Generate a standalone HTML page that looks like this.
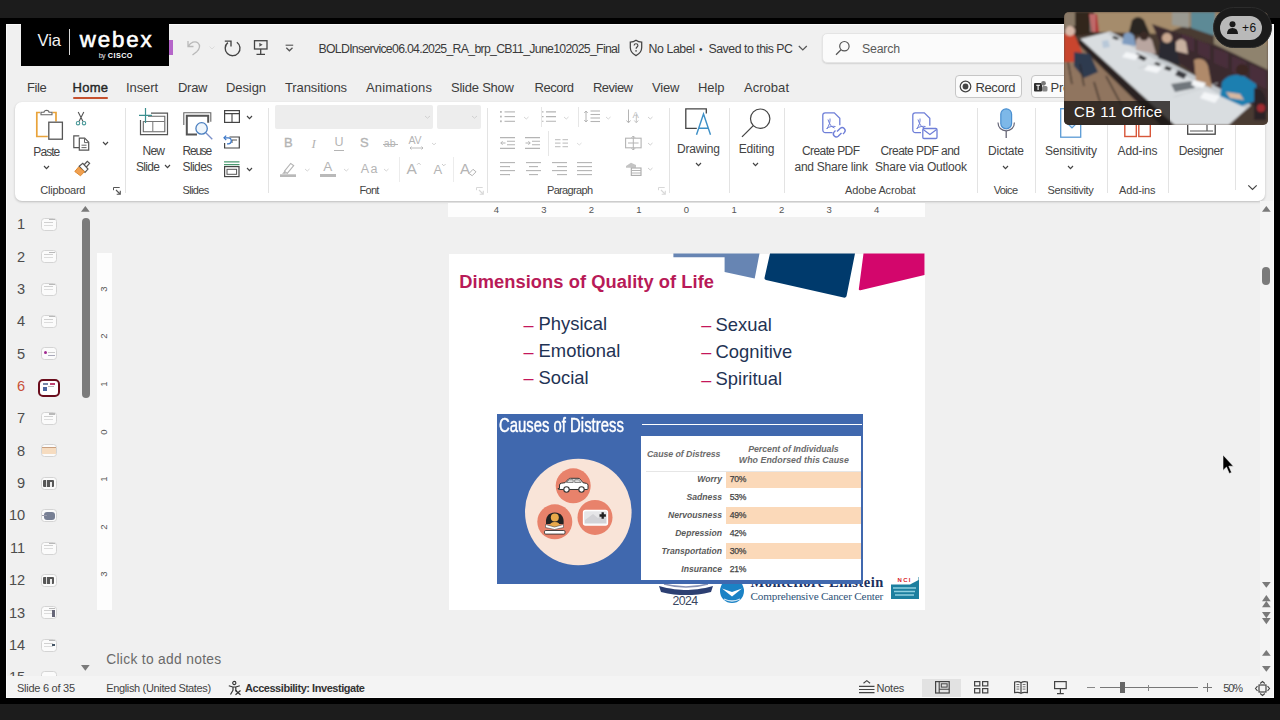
<!DOCTYPE html>
<html lang="en">
<head>
<meta charset="utf-8">
<title>PowerPoint via Webex</title>
<style>
*{box-sizing:border-box;margin:0;padding:0}
html,body{width:1280px;height:720px;overflow:hidden;background:#000}
body{position:relative;font-family:"Liberation Sans",sans-serif;color:#333;font-size:12px}
.abs{position:absolute}
.t{position:absolute;white-space:nowrap;line-height:1}
svg{overflow:visible}
#app{left:6px;top:24px;width:1268px;height:674px;background:#f0f0f0;overflow:hidden}
#pg{left:-6px;top:-24px;width:1280px;height:720px}
</style>
</head>
<body>
<div class="abs" style="left:0;top:0;width:1280px;height:18px;background:#1c1c1c"></div>
<div class="abs" style="left:0;top:704px;width:1280px;height:16px;background:#1c1c1c"></div>
<div class="abs" id="app"><div class="abs" id="pg">
<!-- TITLE BAR -->
<div class="abs" style="left:169px;top:40px;width:4px;height:15px;background:#b565c9;"></div>
<svg class="abs" style="left:186px;top:39px;" width="16" height="17" viewBox="0 0 16 17" fill="none"><path d="M2 2v5.5h5.5M2.3 7.3C4.5 3.2 9.2 1.6 12 4c2.6 2.3 1.6 5.8-1 8.400L6.500 16" stroke="#b9b9b9" stroke-width="1.3"/></svg>
<svg class="abs" style="left:209px;top:46px;" width="6" height="4" viewBox="0 0 6 4" fill="none"><path d="M.5.5l2.500 2.500L5.500.5" stroke="#dcdcdc" stroke-width="1"/></svg>
<svg class="abs" style="left:224px;top:39px;" width="17" height="17" viewBox="0 0 17 17" fill="none"><path d="M12.840 3.240A7.400 7.400 0 1 1 3.840 3.630" stroke="#444" stroke-width="1.350"/><path d="M.8 2.100h6.200v5.300" stroke="#444" stroke-width="1.350"/></svg>
<svg class="abs" style="left:253px;top:40px;" width="16" height="16" viewBox="0 0 16 16" fill="none"><rect x="1.500" y=".7" width="12.500" height="8.300" stroke="#444" stroke-width="1.3"/><path d="M7.700 9v5.200M3.500 14.400h8.500" stroke="#444" stroke-width="1.3"/><path d="M6.300 2.800v4l3.300-2z" fill="#555"/></svg>
<svg class="abs" style="left:285px;top:44px;" width="9" height="9" viewBox="0 0 9 9" fill="none"><path d="M.6 1.200h7.600" stroke="#555" stroke-width="1.100"/><path d="M1.300 3.800l3.100 3 3.100-3" stroke="#555" stroke-width="1.300"/></svg>
<div class="t" style="left:318.50px;top:43px;font-size:12.3px;color:#3b3b3b;letter-spacing:-0.707px;">BOLDInservice06.04.2025_RA_brp_CB11_June102025_Final</div>
<svg class="abs" style="left:629px;top:39px;" width="14" height="18" viewBox="0 0 14 18" fill="none"><path d="M7 1.200C5.200 2.600 3.200 3.100 1.300 3.200v5.300c0 4 2.700 6.600 5.700 8.100 3-1.500 5.700-4.100 5.700-8.100V3.200C10.800 3.100 8.800 2.600 7 1.200z" stroke="#444" stroke-width="1.250"/><path d="M5.100 6.600c0-1.300.9-1.900 1.900-1.900s1.900.7 1.900 1.800c0 1.500-1.800 1.600-1.800 3.200" stroke="#444" stroke-width="1.150"/><circle cx="7.050" cy="11.900" r=".8" fill="#444"/></svg>
<div class="t" style="left:648.50px;top:43px;font-size:12.3px;color:#3b3b3b;letter-spacing:-0.391px;">No Label</div>
<div class="t" style="left:699.00px;top:45px;font-size:10px;color:#3b3b3b;">•</div>
<div class="t" style="left:708.50px;top:43px;font-size:12.3px;color:#3b3b3b;letter-spacing:-0.474px;">Saved to this PC</div>
<svg class="abs" style="left:798px;top:45px;" width="10" height="7" viewBox="0 0 10 7" fill="none"><path d="M.8 1l4 4 4-4" stroke="#555" stroke-width="1.200"/></svg>
<div class="abs" style="left:822px;top:33px;width:330px;height:30px;background:#fbfbfb;border-radius:5px;border:1px solid #e4e4e4;box-shadow:0 1px 1.500px rgba(0,0,0,.12)"></div>
<svg class="abs" style="left:835px;top:40px;" width="16" height="16" viewBox="0 0 16 16" fill="none"><circle cx="9.400" cy="6.200" r="4.700" stroke="#555" stroke-width="1.200"/><path d="M6 9.700L1 14.800" stroke="#555" stroke-width="1.300"/></svg>
<div class="t" style="left:862.00px;top:43px;font-size:12.3px;color:#5a5a5a;letter-spacing:-0.195px;">Search</div>
<div class="t" style="left:27.00px;top:81px;font-size:13px;color:#3d3d3d;letter-spacing:-0.399px;">File</div>
<div class="t" style="left:72.50px;top:81px;font-size:13px;color:#262626;letter-spacing:0.274px;-webkit-text-stroke:.4px #262626;">Home</div>
<div class="t" style="left:126.00px;top:81px;font-size:13px;color:#3d3d3d;letter-spacing:-0.103px;">Insert</div>
<div class="t" style="left:178.00px;top:81px;font-size:13px;color:#3d3d3d;letter-spacing:-0.279px;">Draw</div>
<div class="t" style="left:226.00px;top:81px;font-size:13px;color:#3d3d3d;letter-spacing:-0.094px;">Design</div>
<div class="t" style="left:285.00px;top:81px;font-size:13px;color:#3d3d3d;letter-spacing:-0.110px;">Transitions</div>
<div class="t" style="left:366.00px;top:81px;font-size:13px;color:#3d3d3d;letter-spacing:0.188px;">Animations</div>
<div class="t" style="left:451.00px;top:81px;font-size:13px;color:#3d3d3d;letter-spacing:-0.227px;">Slide Show</div>
<div class="t" style="left:534.50px;top:81px;font-size:13px;color:#3d3d3d;letter-spacing:-0.482px;">Record</div>
<div class="t" style="left:593.00px;top:81px;font-size:13px;color:#3d3d3d;letter-spacing:-0.525px;">Review</div>
<div class="t" style="left:652.00px;top:81px;font-size:13px;color:#3d3d3d;letter-spacing:-0.148px;">View</div>
<div class="t" style="left:698.00px;top:81px;font-size:13px;color:#3d3d3d;letter-spacing:-0.079px;">Help</div>
<div class="t" style="left:744.00px;top:81px;font-size:13px;color:#3d3d3d;letter-spacing:0.033px;">Acrobat</div>
<div class="abs" style="left:72.5px;top:96.5px;width:35.5px;height:2.2px;background:#c5512f;border-radius:1px"></div>
<div class="abs" style="left:955px;top:74.5px;width:66.5px;height:23.5px;background:#fbfbfb;border-radius:4px;border:1px solid #c6c6c6"></div>
<svg class="abs" style="left:959px;top:79.8px;" width="13" height="13" viewBox="0 0 13 13" fill="none"><circle cx="6.500" cy="6.500" r="5.300" stroke="#444" stroke-width="1.200"/><circle cx="6.500" cy="6.500" r="2.900" fill="#444"/></svg>
<div class="t" style="left:975.50px;top:81px;font-size:13px;color:#3d3d3d;letter-spacing:-0.382px;">Record</div>
<div class="abs" style="left:1030.5px;top:74.5px;width:80px;height:23.5px;background:#fbfbfb;border-radius:4px;border:1px solid #c6c6c6"></div>
<svg class="abs" style="left:1034px;top:80px;" width="14" height="13" viewBox="0 0 14 13" fill="none"><rect x="0" y="3" width="8" height="8.500" rx="1" fill="#2e2e2e"/><circle cx="9.500" cy="3.300" r="2.400" fill="#777"/><rect x="8" y="6" width="5.500" height="5.500" rx="1.500" fill="#888"/><path d="M2.200 5.300h3.800M4.100 5.300v4.600" stroke="#fff" stroke-width="1.100"/></svg>
<div class="t" style="left:1050.50px;top:81px;font-size:13px;color:#3d3d3d;letter-spacing:-0.217px;">Present</div>
<!-- RIBBON -->
<div class="abs" style="left:15px;top:102px;width:1250px;height:98.5px;background:#fff;border-radius:7px;box-shadow:0 1px 2.500px rgba(0,0,0,.22)"></div>
<svg class="abs" style="left:35px;top:109px;" width="30" height="32" viewBox="0 0 30 32" fill="none"><path d="M5 3.500H1.800v24h11" stroke="#e9a33a" stroke-width="1.700"/><path d="M17.500 3.500h3.500v9" stroke="#e9a33a" stroke-width="1.700"/><path d="M6 5.800V3.300h3c0-2.600 5-2.600 5 0h3v2.500z" stroke="#666" stroke-width="1.100" fill="#fff"/><rect x="13.800" y="13.200" width="13.600" height="17" stroke="#555" stroke-width="1.300" fill="#fff"/></svg>
<div class="t" style="left:33.30px;top:146px;font-size:12px;color:#444;letter-spacing:-0.922px;">Paste</div>
<svg class="abs" style="left:43.9px;top:166.0px;" width="5" height="2.6" viewBox="0 0 5 2.6" fill="none"><path d="M0 0l2.5 2.6L5 0" stroke="#444" stroke-width="1.2"/></svg>
<svg class="abs" style="left:76px;top:112px;" width="10" height="13.5" viewBox="0 0 10 13.5" fill="none"><path d="M2.200 0L7 9.500M7.800 0L3 9.500" stroke="#555" stroke-width="1.100"/><circle cx="2" cy="11.200" r="1.700" stroke="#4a9a9a" stroke-width="1.100"/><circle cx="8" cy="11.200" r="1.700" stroke="#4a9a9a" stroke-width="1.100"/></svg>
<svg class="abs" style="left:73px;top:135px;" width="17" height="16" viewBox="0 0 17 16" fill="none"><path d="M6 12.700H.8V.8h5.500" stroke="#555" stroke-width="1.200"/><path d="M6.300 3.200h5.400l4 4v8H6.300z" stroke="#555" stroke-width="1.200" fill="#fff"/><path d="M11.500 3.400v4.200h4M8.500 10.200h5M8.500 12.600h5" stroke="#666" stroke-width="1"/></svg>
<svg class="abs" style="left:102.9px;top:142.29999999999998px;" width="5" height="2.6" viewBox="0 0 5 2.6" fill="none"><path d="M0 0l2.5 2.6L5 0" stroke="#444" stroke-width="1.2"/></svg>
<svg class="abs" style="left:74px;top:160px;" width="17" height="17" viewBox="0 0 17 17" fill="none"><path d="M9.500 5.500l3.800-4.200 2.300 2.100-3.700 4.100" stroke="#555" stroke-width="1.200" fill="#fff"/><path d="M5.200 6.300l3.600-3 5.200 5.800-3 3.300z" stroke="#555" stroke-width="1.200" fill="#fff"/><path d="M4.600 7L.8 11.500l5.700 4.300 4-4.200z" fill="#f0a050" stroke="#e08a30" stroke-width="1"/></svg>
<div class="t" style="left:40.30px;top:185px;font-size:11px;color:#444;letter-spacing:-0.236px;">Clipboard</div>
<svg class="abs" style="left:113px;top:187px;" width="8" height="8" viewBox="0 0 8 8" fill="none"><path d="M.5 3.200V.5h6.200" stroke="#555" stroke-width="1"/><path d="M3 3l4 4M7.300 3.700v3.600H3.700" stroke="#555" stroke-width="1.100"/></svg>
<div class="abs" style="left:125px;top:108px;width:1px;height:85px;background:#e3e3e3;"></div>
<svg class="abs" style="left:139px;top:108px;" width="30" height="28" viewBox="0 0 30 28" fill="none"><path d="M12 5.200h16.500v21.400H1.500V12" stroke="#555" stroke-width="1.200"/><path d="M9 8.200h16.800v15.600H4.300V13" stroke="#666" stroke-width="1.100"/><path d="M4.500 13.500h21M13.800 13.500v10" stroke="#777" stroke-width="1"/><path d="M6.500 0v15M0 7.300h13" stroke="#3a8f8f" stroke-width="1.200"/></svg>
<div class="t" style="left:142.50px;top:145px;font-size:12px;color:#444;letter-spacing:-0.753px;">New</div>
<div class="t" style="left:136.00px;top:161px;font-size:12px;color:#444;letter-spacing:-0.671px;">Slide</div>
<svg class="abs" style="left:165.0px;top:165.29999999999998px;" width="5" height="2.6" viewBox="0 0 5 2.6" fill="none"><path d="M0 0l2.5 2.6L5 0" stroke="#444" stroke-width="1.2"/></svg>
<svg class="abs" style="left:183px;top:112px;" width="31" height="29" viewBox="0 0 31 29" fill="none"><path d="M.8 13V.8h27v9" stroke="#666" stroke-width="1.100"/><path d="M14 22.500H3.800V3.800h21.400v7" stroke="#555" stroke-width="2"/><circle cx="18.600" cy="16.400" r="5.700" stroke="#4a7fc0" stroke-width="1.300" fill="#eef5fb"/><path d="M22.800 20.700l6.500 6.500" stroke="#7a8fc8" stroke-width="1.300"/></svg>
<div class="t" style="left:182.60px;top:145px;font-size:12px;color:#444;letter-spacing:-1.272px;">Reuse</div>
<div class="t" style="left:182.60px;top:161px;font-size:12px;color:#444;letter-spacing:-0.617px;">Slides</div>
<svg class="abs" style="left:224px;top:110px;" width="16" height="13" viewBox="0 0 16 13" fill="none"><rect x=".6" y=".6" width="14.800" height="11.800" stroke="#444" stroke-width="1.200"/><path d="M.6 3.600h14.800M8 3.600v8.800" stroke="#444" stroke-width="1.100"/></svg>
<svg class="abs" style="left:246.7px;top:116.2px;" width="5" height="2.6" viewBox="0 0 5 2.6" fill="none"><path d="M0 0l2.5 2.6L5 0" stroke="#444" stroke-width="1.2"/></svg>
<svg class="abs" style="left:223px;top:135px;" width="17" height="14" viewBox="0 0 17 14" fill="none"><path d="M6.500 2h9.800v11H1.600V8" stroke="#444" stroke-width="1.200"/><path d="M9 5h5M9 5v3" stroke="#555" stroke-width="1"/><path d="M1 2.800h4.300a3 3 0 010 6H4" stroke="#3c78c8" stroke-width="1.200"/><path d="M3.200.6L1 2.800 3.200 5" stroke="#3c78c8" stroke-width="1.200"/></svg>
<svg class="abs" style="left:224px;top:161px;" width="16" height="16" viewBox="0 0 16 16" fill="none"><path d="M0 .8h15.500M0 3.600h15.500" stroke="#4a9a70" stroke-width="1.200"/><rect x=".6" y="5.600" width="14.400" height="10" stroke="#444" stroke-width="1.200"/><rect x="3" y="8.300" width="9.600" height="5" stroke="#555" stroke-width="1"/></svg>
<svg class="abs" style="left:246.7px;top:168.0px;" width="5" height="2.6" viewBox="0 0 5 2.6" fill="none"><path d="M0 0l2.5 2.6L5 0" stroke="#444" stroke-width="1.2"/></svg>
<div class="t" style="left:182.60px;top:185px;font-size:11px;color:#444;letter-spacing:-0.652px;">Slides</div>
<div class="abs" style="left:267.5px;top:108px;width:1px;height:85px;background:#e3e3e3;"></div>
<div class="abs" style="left:275px;top:105px;width:158px;height:24px;background:#ededed;border-radius:2px"></div>
<div class="abs" style="left:437px;top:105px;width:43.5px;height:24px;background:#ededed;border-radius:2px"></div>
<svg class="abs" style="left:425.0px;top:115.9px;" width="5" height="2.2" viewBox="0 0 5 2.2" fill="none"><path d="M0 0l2.5 2.2L5 0" stroke="#d0d0d0" stroke-width="1"/></svg>
<svg class="abs" style="left:471.5px;top:115.9px;" width="5" height="2.2" viewBox="0 0 5 2.2" fill="none"><path d="M0 0l2.5 2.2L5 0" stroke="#d0d0d0" stroke-width="1"/></svg>
<div class="t" style="left:284.00px;top:136px;font-size:13px;color:#b4b4b4;-webkit-text-stroke:.35px #b4b4b4;">B</div>
<div class="t" style="left:311.50px;top:137px;font-size:13px;color:#b4b4b4;font-family:'Liberation Serif',serif;font-style:italic;">I</div>
<div class="t" style="left:334.50px;top:136px;font-size:12.5px;color:#b4b4b4;">U</div>
<div class="abs" style="left:334px;top:149.5px;width:10px;height:1px;background:#b4b4b4;"></div>
<div class="t" style="left:360.00px;top:136px;font-size:13px;color:#b4b4b4;-webkit-text-stroke:.35px #b4b4b4;">S</div>
<div class="t" style="left:383.80px;top:138px;font-size:10.5px;color:#b4b4b4;">ab</div>
<div class="abs" style="left:382.5px;top:143.5px;width:15.5px;height:1px;background:#b4b4b4;"></div>
<div class="t" style="left:408.50px;top:135px;font-size:10.5px;color:#b4b4b4;letter-spacing:-.3px;">AV</div>
<svg class="abs" style="left:408.5px;top:146px;" width="15" height="4" viewBox="0 0 15 4" fill="none"><path d="M1 2h13M2.500.5L1 2l1.500 1.500M12.500.5L14 2l-1.500 1.500" stroke="#b4b4b4" stroke-width=".9"/></svg>
<svg class="abs" style="left:431.5px;top:142.6px;" width="4" height="1.8" viewBox="0 0 4 1.8" fill="none"><path d="M0 0l2.0 1.8L4 0" stroke="#d6d6d6" stroke-width="1"/></svg>
<svg class="abs" style="left:280px;top:161px;" width="16" height="16" viewBox="0 0 16 16" fill="none"><path d="M4.500 10.200l6.200-7.800 3 2.300-6.500 7.700z" stroke="#b4b4b4" stroke-width="1.100"/><path d="M4.500 10.200L2 12.800h4z" fill="#b4b4b4"/><rect x="0" y="13.300" width="16" height="2.700" fill="#b9b9b9"/></svg>
<svg class="abs" style="left:304.75px;top:168.5px;" width="4.5" height="2" viewBox="0 0 4.5 2" fill="none"><path d="M0 0l2.25 2L4.5 0" stroke="#d6d6d6" stroke-width="1"/></svg>
<div class="t" style="left:323.20px;top:160px;font-size:13.5px;color:#b4b4b4;">A</div>
<div class="abs" style="left:320px;top:174.3px;width:16px;height:2.7px;background:#b9b9b9;"></div>
<svg class="abs" style="left:344.35px;top:168.5px;" width="4.5" height="2" viewBox="0 0 4.5 2" fill="none"><path d="M0 0l2.25 2L4.5 0" stroke="#d6d6d6" stroke-width="1"/></svg>
<div class="t" style="left:360.80px;top:163px;font-size:12.5px;color:#b4b4b4;letter-spacing:1.410px;">Aa</div>
<svg class="abs" style="left:383.75px;top:168.5px;" width="4.5" height="2" viewBox="0 0 4.5 2" fill="none"><path d="M0 0l2.25 2L4.5 0" stroke="#d6d6d6" stroke-width="1"/></svg>
<div class="abs" style="left:399px;top:157px;width:1px;height:25px;background:#ececec;"></div>
<div class="t" style="left:406.50px;top:161px;font-size:15.5px;color:#b4b4b4;">A</div>
<svg class="abs" style="left:417.2px;top:163.1px;" width="3.6" height="1.8" viewBox="0 0 3.6 1.8" fill="none"><path d="M0 1.8L1.8 0l1.8 1.8" stroke="#c4c4c4" stroke-width="0.9"/></svg>
<div class="t" style="left:433.50px;top:163px;font-size:13px;color:#b4b4b4;">A</div>
<svg class="abs" style="left:442.2px;top:163.6px;" width="3.6" height="1.8" viewBox="0 0 3.6 1.8" fill="none"><path d="M0 0l1.8 1.8L3.6 0" stroke="#c4c4c4" stroke-width="0.9"/></svg>
<div class="abs" style="left:453px;top:157px;width:1px;height:25px;background:#ececec;"></div>
<div class="t" style="left:460.00px;top:161px;font-size:15px;color:#b4b4b4;">A</div>
<svg class="abs" style="left:468px;top:168px;" width="9" height="8" viewBox="0 0 9 8" fill="none"><path d="M1 5.500L5 1.300l3 2.500-3.800 3.900z" stroke="#b4b4b4" stroke-width="1" fill="#fff"/></svg>
<div class="t" style="left:359.40px;top:185px;font-size:11px;color:#444;letter-spacing:-0.670px;">Font</div>
<svg class="abs" style="left:476px;top:186.5px;" width="8" height="8" viewBox="0 0 8 8" fill="none"><path d="M.5 3.200V.5h6.200" stroke="#d8d8d8" stroke-width="1"/><path d="M3 3l4 4M7.300 3.700v3.600H3.700" stroke="#d8d8d8" stroke-width="1.100"/></svg>
<div class="abs" style="left:487px;top:108px;width:1px;height:85px;background:#e3e3e3;"></div>
<svg class="abs" style="left:499.5px;top:110.5px;" width="16" height="12" viewBox="0 0 16 12" fill="none"><rect x="0" y="0.0" width="1.800" height="1.800" fill="#b9b9b9"/><path d="M4.500 0.9h10.500" stroke="#b4b4b4" stroke-width="1.100"/><rect x="0" y="4.7" width="1.800" height="1.800" fill="#b9b9b9"/><path d="M4.500 5.6000000000000005h10.500" stroke="#b4b4b4" stroke-width="1.100"/><rect x="0" y="9.4" width="1.800" height="1.800" fill="#b9b9b9"/><path d="M4.500 10.3h10.500" stroke="#b4b4b4" stroke-width="1.100"/></svg>
<svg class="abs" style="left:523.75px;top:116.5px;" width="4.5" height="2" viewBox="0 0 4.5 2" fill="none"><path d="M0 0l2.25 2L4.5 0" stroke="#d6d6d6" stroke-width="1"/></svg>
<svg class="abs" style="left:542px;top:110.5px;" width="16" height="12" viewBox="0 0 16 12" fill="none"><path d="M0 0.9h1.500M4 0.9h10" stroke="#b4b4b4" stroke-width="1.100"/><path d="M0 5.6000000000000005h1.500M4 5.6000000000000005h10" stroke="#b4b4b4" stroke-width="1.100"/><path d="M0 10.3h1.500M4 10.3h10" stroke="#b4b4b4" stroke-width="1.100"/></svg>
<svg class="abs" style="left:564.35px;top:116.5px;" width="4.5" height="2" viewBox="0 0 4.5 2" fill="none"><path d="M0 0l2.25 2L4.5 0" stroke="#d6d6d6" stroke-width="1"/></svg>
<div class="abs" style="left:541px;top:107px;width:1px;height:20px;background:#e6e6e6;"></div>
<div class="abs" style="left:577.5px;top:107px;width:1px;height:20px;background:#e6e6e6;"></div>
<svg class="abs" style="left:584px;top:110px;" width="17" height="13" viewBox="0 0 17 13" fill="none"><path d="M2 1v11M.3 3L2 1l1.700 2M.3 10L2 12l1.700-2" stroke="#b4b4b4" stroke-width="1"/><path d="M6.500 1.0h9.500" stroke="#b4b4b4" stroke-width="1.100"/><path d="M6.500 4.5h9.500" stroke="#b4b4b4" stroke-width="1.100"/><path d="M6.500 8.0h9.500" stroke="#b4b4b4" stroke-width="1.100"/><path d="M6.500 11.5h9.500" stroke="#b4b4b4" stroke-width="1.100"/></svg>
<svg class="abs" style="left:606.15px;top:116.5px;" width="4.5" height="2" viewBox="0 0 4.5 2" fill="none"><path d="M0 0l2.25 2L4.5 0" stroke="#d6d6d6" stroke-width="1"/></svg>
<svg class="abs" style="left:626px;top:109px;" width="14" height="15" viewBox="0 0 14 15" fill="none"><path d="M2.500 .5v13M.5 11.500l2 2.300 2-2.300" stroke="#b4b4b4" stroke-width="1"/><path d="M10.300 13.500V5M8.300 11.500l2 2.300 2-2.300" stroke="#c4c4c4" stroke-width="1"/></svg>
<div class="t" style="left:632.50px;top:110px;font-size:9.5px;color:#bcbcbc;">A</div>
<svg class="abs" style="left:648.35px;top:116.5px;" width="4.5" height="2" viewBox="0 0 4.5 2" fill="none"><path d="M0 0l2.25 2L4.5 0" stroke="#d0d0d0" stroke-width="1"/></svg>
<svg class="abs" style="left:499.5px;top:137px;" width="16" height="12" viewBox="0 0 16 12" fill="none"><path d="M0 .6h15M7 4.200h8M7 7.800h8M0 11.400h15" stroke="#b4b4b4" stroke-width="1.100"/><path d="M5.500 6H.8M2.600 4.200L.8 6l1.800 1.800" stroke="#b4b4b4" stroke-width="1"/></svg>
<svg class="abs" style="left:525px;top:137px;" width="16" height="12" viewBox="0 0 16 12" fill="none"><path d="M0 .6h15M7 4.200h8M7 7.800h8M0 11.400h15" stroke="#b4b4b4" stroke-width="1.100"/><path d="M.5 6h4.700M3.400 4.200L5.200 6 3.400 7.800" stroke="#b4b4b4" stroke-width="1"/></svg>
<div class="abs" style="left:547.5px;top:131px;width:1px;height:25px;background:#e6e6e6;"></div>
<svg class="abs" style="left:555px;top:139px;" width="13" height="9" viewBox="0 0 13 9" fill="none"><path d="M0 .6h5.500M7.500 .6H13M0 4.100h5.500M7.500 4.100H13M0 7.600h5.500M7.500 7.600H13" stroke="#c8c8c8" stroke-width="1.100"/></svg>
<svg class="abs" style="left:576.75px;top:142.5px;" width="4.5" height="2" viewBox="0 0 4.5 2" fill="none"><path d="M0 0l2.25 2L4.5 0" stroke="#dedede" stroke-width="1"/></svg>
<svg class="abs" style="left:625px;top:136px;" width="17" height="14" viewBox="0 0 17 14" fill="none"><rect x=".6" y="2.200" width="15.500" height="9.600" stroke="#b4b4b4" stroke-width="1.100"/><path d="M8.300 0v14M6.500 1.800L8.300 0l1.800 1.800M6.500 12.200L8.300 14l1.800-1.800M3 7h10.600" stroke="#b4b4b4" stroke-width="1"/></svg>
<svg class="abs" style="left:648.35px;top:142.5px;" width="4.5" height="2" viewBox="0 0 4.5 2" fill="none"><path d="M0 0l2.25 2L4.5 0" stroke="#d0d0d0" stroke-width="1"/></svg>
<svg class="abs" style="left:499.5px;top:162px;" width="16" height="14" viewBox="0 0 16 14" fill="none"><path d="M0 0.6h15" stroke="#b4b4b4" stroke-width="1.100"/><path d="M0 4.6h10" stroke="#b4b4b4" stroke-width="1.100"/><path d="M0 8.6h15" stroke="#b4b4b4" stroke-width="1.100"/><path d="M0 12.6h10" stroke="#b4b4b4" stroke-width="1.100"/></svg>
<svg class="abs" style="left:525.5px;top:162px;" width="16" height="14" viewBox="0 0 16 14" fill="none"><path d="M0 0.6h15" stroke="#b4b4b4" stroke-width="1.100"/><path d="M3 4.6h9" stroke="#b4b4b4" stroke-width="1.100"/><path d="M0 8.6h15" stroke="#b4b4b4" stroke-width="1.100"/><path d="M3 12.6h9" stroke="#b4b4b4" stroke-width="1.100"/></svg>
<svg class="abs" style="left:551.5px;top:162px;" width="16" height="14" viewBox="0 0 16 14" fill="none"><path d="M0 0.6h15" stroke="#b4b4b4" stroke-width="1.100"/><path d="M5 4.6h10" stroke="#b4b4b4" stroke-width="1.100"/><path d="M0 8.6h15" stroke="#b4b4b4" stroke-width="1.100"/><path d="M5 12.6h10" stroke="#b4b4b4" stroke-width="1.100"/></svg>
<svg class="abs" style="left:577px;top:162px;" width="16" height="14" viewBox="0 0 16 14" fill="none"><path d="M0 0.6h15" stroke="#b4b4b4" stroke-width="1.100"/><path d="M0 4.6h15" stroke="#b4b4b4" stroke-width="1.100"/><path d="M0 8.6h15" stroke="#b4b4b4" stroke-width="1.100"/><path d="M0 12.6h15" stroke="#b4b4b4" stroke-width="1.100"/></svg>
<svg class="abs" style="left:625px;top:162px;" width="17" height="14" viewBox="0 0 17 14" fill="none"><path d="M1 4L6 .8l5 2.200v2.800H1z" fill="#c4c4c4"/><rect x="6.300" y="6" width="9.700" height="7.400" stroke="#aaa" stroke-width="1.100" fill="#fff"/><path d="M6.300 8.500h9.700M6.300 11h9.700" stroke="#b4b4b4" stroke-width="1"/></svg>
<svg class="abs" style="left:648.35px;top:168.0px;" width="4.5" height="2" viewBox="0 0 4.5 2" fill="none"><path d="M0 0l2.25 2L4.5 0" stroke="#d0d0d0" stroke-width="1"/></svg>
<div class="t" style="left:547.00px;top:185px;font-size:11px;color:#444;letter-spacing:-0.671px;">Paragraph</div>
<svg class="abs" style="left:657.5px;top:186.5px;" width="8" height="8" viewBox="0 0 8 8" fill="none"><path d="M.5 3.200V.5h6.200" stroke="#d8d8d8" stroke-width="1"/><path d="M3 3l4 4M7.300 3.700v3.600H3.700" stroke="#d8d8d8" stroke-width="1.100"/></svg>
<div class="abs" style="left:668.5px;top:108px;width:1px;height:85px;background:#e3e3e3;"></div>
<svg class="abs" style="left:685px;top:108px;" width="27" height="28" viewBox="0 0 27 28" fill="none"><path d="M21.300 5.500V.8H.8v19.500h11" stroke="#444" stroke-width="1.300"/><path d="M11.500 26.800L18.500 6l7 20.800M13.800 20.300h9.400" stroke="#3d8fc6" stroke-width="1.400"/></svg>
<div class="t" style="left:677.00px;top:143px;font-size:12px;color:#444;letter-spacing:-0.170px;">Drawing</div>
<svg class="abs" style="left:695.5px;top:163.0px;" width="5" height="2.6" viewBox="0 0 5 2.6" fill="none"><path d="M0 0l2.5 2.6L5 0" stroke="#444" stroke-width="1.2"/></svg>
<div class="abs" style="left:729px;top:108px;width:1px;height:85px;background:#e3e3e3;"></div>
<svg class="abs" style="left:741px;top:108px;" width="30" height="30" viewBox="0 0 30 30" fill="none"><circle cx="19.200" cy="10.700" r="9.700" stroke="#444" stroke-width="1.200"/><path d="M12.300 17.600L1 28.900" stroke="#444" stroke-width="1.300"/></svg>
<div class="t" style="left:738.75px;top:143px;font-size:12px;color:#444;letter-spacing:-0.157px;">Editing</div>
<svg class="abs" style="left:753.25px;top:163.0px;" width="5" height="2.6" viewBox="0 0 5 2.6" fill="none"><path d="M0 0l2.5 2.6L5 0" stroke="#444" stroke-width="1.2"/></svg>
<div class="abs" style="left:783.75px;top:108px;width:1px;height:85px;background:#e3e3e3;"></div>
<svg class="abs" style="left:822px;top:112px;" width="26" height="28" viewBox="0 0 26 28" fill="none"><path d="M10.500 20.600H3.300A2.500 2.500 0 01.8 18.100V3.300A2.500 2.500 0 013.300.8h9l5.500 5.500v7" stroke="#6f7fd8" stroke-width="1.300"/><path d="M6 7.500c1.500 4.500 3 7.500 6.500 8.500M5 17c2-4 3.500-7 3-10.500M4.500 16.500c3-2 6-2.500 9-2" stroke="#6f7fd8" stroke-width="1" fill="none"/><path d="M15 19.500l3.300-3.300a3 3 0 014.200 4.200l-1.500 1.500M19.500 21l-3.300 3.300a3 3 0 01-4.200-4.200l1.500-1.500" stroke="#6f7fd8" stroke-width="1.400"/></svg>
<div class="t" style="left:802.00px;top:145px;font-size:12px;color:#444;letter-spacing:-0.595px;">Create PDF</div>
<div class="t" style="left:794.50px;top:161px;font-size:12px;color:#444;letter-spacing:-0.248px;">and Share link</div>
<svg class="abs" style="left:912px;top:112px;" width="26" height="28" viewBox="0 0 26 28" fill="none"><path d="M9 20.600H3.300A2.500 2.500 0 01.8 18.100V3.300A2.500 2.500 0 013.300.8h9l5.500 5.500v7.500" stroke="#6f7fd8" stroke-width="1.300"/><path d="M6 7.500c1.500 4.500 3 7.500 6.500 8.500M5 17c2-4 3.500-7 3-10.500M4.500 16.500c3-2 6-2.500 9-2" stroke="#6f7fd8" stroke-width="1" fill="none"/><rect x="10.800" y="16.500" width="14.200" height="10" rx="1.200" stroke="#6f7fd8" stroke-width="1.300" fill="#fff"/><path d="M11.200 17.500l6.700 5 6.700-5" stroke="#6f7fd8" stroke-width="1.200"/></svg>
<div class="t" style="left:880.50px;top:145px;font-size:12px;color:#444;letter-spacing:-0.555px;">Create PDF and</div>
<div class="t" style="left:875.00px;top:161px;font-size:12px;color:#444;letter-spacing:-0.212px;">Share via Outlook</div>
<div class="t" style="left:845.00px;top:185px;font-size:11px;color:#444;letter-spacing:-0.139px;">Adobe Acrobat</div>
<div class="abs" style="left:977px;top:108px;width:1px;height:85px;background:#e3e3e3;"></div>
<svg class="abs" style="left:997px;top:108px;" width="18" height="32" viewBox="0 0 18 32" fill="none"><rect x="3.800" y=".8" width="10.800" height="20" rx="5.400" fill="#7db8e8" stroke="#4a8fd0" stroke-width="1.200"/><path d="M1 14.500c0 5 3.500 8.300 8.200 8.300s8.200-3.300 8.200-8.300" stroke="#667" stroke-width="1.200"/><path d="M9.200 23v7" stroke="#667" stroke-width="1.300"/></svg>
<div class="t" style="left:988.00px;top:145px;font-size:12px;color:#444;letter-spacing:-0.225px;">Dictate</div>
<svg class="abs" style="left:1003.0px;top:165.7px;" width="5" height="2.6" viewBox="0 0 5 2.6" fill="none"><path d="M0 0l2.5 2.6L5 0" stroke="#444" stroke-width="1.2"/></svg>
<div class="t" style="left:993.75px;top:185px;font-size:11px;color:#444;letter-spacing:-0.665px;">Voice</div>
<div class="abs" style="left:1034.5px;top:108px;width:1px;height:85px;background:#e3e3e3;"></div>
<svg class="abs" style="left:1060px;top:108px;" width="22" height="30" viewBox="0 0 22 30" fill="none"><rect x=".7" y=".7" width="20" height="28.500" stroke="#5b9bd5" stroke-width="1.300"/><path d="M8 16l6.500-6.500 4 4L12 20z" stroke="#5b9bd5" stroke-width="1.200" fill="#cfe3f5"/></svg>
<div class="t" style="left:1045.00px;top:145px;font-size:12px;color:#444;letter-spacing:-0.202px;">Sensitivity</div>
<svg class="abs" style="left:1068.0px;top:165.7px;" width="5" height="2.6" viewBox="0 0 5 2.6" fill="none"><path d="M0 0l2.5 2.6L5 0" stroke="#444" stroke-width="1.2"/></svg>
<div class="t" style="left:1047.50px;top:185px;font-size:11px;color:#444;letter-spacing:-0.327px;">Sensitivity</div>
<div class="abs" style="left:1106.75px;top:108px;width:1px;height:85px;background:#e3e3e3;"></div>
<svg class="abs" style="left:1124px;top:110px;" width="28" height="28" viewBox="0 0 28 28" fill="none"><rect x=".8" y="14" width="11.500" height="12.500" stroke="#d8573a" stroke-width="1.400"/><rect x="14.800" y="14" width="11.500" height="12.500" stroke="#d8573a" stroke-width="1.400"/><rect x=".8" y="0" width="11.500" height="11.500" stroke="#d8573a" stroke-width="1.400"/></svg>
<div class="t" style="left:1117.50px;top:145px;font-size:12px;color:#444;letter-spacing:-0.115px;">Add-ins</div>
<div class="t" style="left:1119.00px;top:185px;font-size:11px;color:#444;letter-spacing:-0.133px;">Add-ins</div>
<div class="abs" style="left:1167.5px;top:108px;width:1px;height:85px;background:#e3e3e3;"></div>
<svg class="abs" style="left:1187px;top:110px;" width="29" height="25" viewBox="0 0 29 25" fill="none"><rect x=".7" y=".7" width="27.500" height="23.500" stroke="#444" stroke-width="1.300"/><path d="M3 21h23M20 4v17" stroke="#555" stroke-width="1.200"/></svg>
<div class="t" style="left:1178.75px;top:145px;font-size:12px;color:#444;letter-spacing:-0.432px;">Designer</div>
<div class="abs" style="left:1234.5px;top:108px;width:1px;height:82px;background:#e3e3e3;"></div>
<svg class="abs" style="left:1247.5px;top:185px;" width="9" height="5" viewBox="0 0 9 5" fill="none"><path d="M.3.300l4.200 4.200L8.700.3" stroke="#444" stroke-width="1.200"/></svg>
<!-- WORK AREA -->
<svg class="abs" style="left:81.3px;top:206px;" width="8.7" height="5.7" viewBox="0 0 8.7 5.7" fill="none"><path d="M0 5.7L4.35 0L8.7 5.7z" fill="#7a7a7a"/></svg>
<div class="abs" style="left:81.5px;top:218px;width:8.2px;height:180px;background:#7b7b7b;border-radius:4px"></div>
<svg class="abs" style="left:81.3px;top:664.5px;" width="8.7" height="5.7" viewBox="0 0 8.7 5.7" fill="none"><path d="M0 0L4.35 5.7L8.7 0z" fill="#7a7a7a"/></svg>
<div class="t" style="left:17.08px;top:217px;font-size:14.6px;color:#4d4d4d;">1</div>
<div class="abs" style="left:40.6px;top:217.89999999999998px;width:16.6px;height:13px;background:#fbfbfb;border:1px solid #d4d4d4;border-radius:3.500px"></div>
<div class="abs" style="left:44px;top:221.7px;width:9px;height:1px;background:#d0d0d0;"></div>
<div class="abs" style="left:44px;top:224.7px;width:9px;height:1px;background:#dcdcdc;"></div>
<div class="abs" style="left:49px;top:219.2px;width:6px;height:1.2px;background:#b9b9b9;"></div>
<div class="t" style="left:17.08px;top:250px;font-size:14.6px;color:#4d4d4d;">2</div>
<div class="abs" style="left:40.6px;top:250.26999999999998px;width:16.6px;height:13px;background:#fbfbfb;border:1px solid #d4d4d4;border-radius:3.500px"></div>
<div class="abs" style="left:44px;top:254.07px;width:9px;height:1px;background:#d0d0d0;"></div>
<div class="abs" style="left:44px;top:257.07px;width:9px;height:1px;background:#dcdcdc;"></div>
<div class="abs" style="left:49px;top:251.57px;width:6px;height:1.2px;background:#b9b9b9;"></div>
<div class="t" style="left:17.08px;top:282px;font-size:14.6px;color:#4d4d4d;">3</div>
<div class="abs" style="left:40.6px;top:282.64px;width:16.6px;height:13px;background:#fbfbfb;border:1px solid #d4d4d4;border-radius:3.500px"></div>
<div class="abs" style="left:44px;top:286.44px;width:9px;height:1px;background:#d0d0d0;"></div>
<div class="abs" style="left:44px;top:289.44px;width:9px;height:1px;background:#dcdcdc;"></div>
<div class="abs" style="left:49px;top:283.94px;width:6px;height:1.2px;background:#b9b9b9;"></div>
<div class="t" style="left:17.08px;top:314px;font-size:14.6px;color:#4d4d4d;">4</div>
<div class="abs" style="left:40.6px;top:315.00999999999993px;width:16.6px;height:13px;background:#fbfbfb;border:1px solid #d4d4d4;border-radius:3.500px"></div>
<div class="abs" style="left:44px;top:318.80999999999995px;width:9px;height:1px;background:#d0d0d0;"></div>
<div class="abs" style="left:44px;top:321.80999999999995px;width:9px;height:1px;background:#dcdcdc;"></div>
<div class="abs" style="left:49px;top:316.30999999999995px;width:6px;height:1.2px;background:#b9b9b9;"></div>
<div class="t" style="left:17.08px;top:347px;font-size:14.6px;color:#4d4d4d;">5</div>
<div class="abs" style="left:40.6px;top:347.37999999999994px;width:16.6px;height:13px;background:#fbfbfb;border:1px solid #d4d4d4;border-radius:3.500px"></div>
<div class="abs" style="left:44px;top:350.67999999999995px;width:3px;height:3px;background:#a02a90;border-radius:2px"></div>
<div class="abs" style="left:48px;top:354.67999999999995px;width:7px;height:1px;background:#aab;"></div>
<div class="abs" style="left:48px;top:351.67999999999995px;width:7px;height:1px;background:#ccc;"></div>
<div class="t" style="left:17.08px;top:379px;font-size:14.6px;color:#c8503a;">6</div>
<div class="abs" style="left:38.2px;top:378.6px;width:21.6px;height:18.6px;background:#fff;border:2.600px solid #6a0d1c;border-radius:5px"></div>
<div class="abs" style="left:43px;top:383px;width:5px;height:2px;background:#7788aa;"></div>
<div class="abs" style="left:43px;top:386.5px;width:4px;height:4px;background:#4a66a0;"></div>
<div class="abs" style="left:48px;top:386px;width:6px;height:1px;background:#bbb;"></div>
<div class="abs" style="left:50px;top:383px;width:5px;height:1.5px;background:#c04070;"></div>
<div class="t" style="left:17.08px;top:411px;font-size:14.6px;color:#4d4d4d;">7</div>
<div class="abs" style="left:40.6px;top:412.11999999999995px;width:16.6px;height:13px;background:#fbfbfb;border:1px solid #d4d4d4;border-radius:3.500px"></div>
<div class="abs" style="left:44px;top:415.91999999999996px;width:9px;height:1px;background:#d0d0d0;"></div>
<div class="abs" style="left:44px;top:418.91999999999996px;width:9px;height:1px;background:#dcdcdc;"></div>
<div class="abs" style="left:49px;top:413.41999999999996px;width:6px;height:1.2px;background:#b9b9b9;"></div>
<div class="t" style="left:17.08px;top:444px;font-size:14.6px;color:#4d4d4d;">8</div>
<div class="abs" style="left:40.6px;top:444.48999999999995px;width:16.6px;height:13px;background:#fbfbfb;border:1px solid #d4d4d4;border-radius:3.500px"></div>
<div class="abs" style="left:42px;top:447.28999999999996px;width:14px;height:7px;background:#f6dcc0;"></div>
<div class="abs" style="left:42px;top:447.28999999999996px;width:14px;height:1px;background:#c9a080;"></div>
<div class="t" style="left:17.08px;top:476px;font-size:14.6px;color:#4d4d4d;">9</div>
<div class="abs" style="left:40.6px;top:476.85999999999996px;width:16.6px;height:13px;background:#fbfbfb;border:1px solid #d4d4d4;border-radius:3.500px"></div>
<div class="abs" style="left:43px;top:479.65999999999997px;width:11px;height:7.5px;background:#3a3a3a;border-radius:1px;opacity:.85"></div>
<div class="abs" style="left:46px;top:479.65999999999997px;width:1px;height:7.5px;background:#ddd;"></div>
<div class="abs" style="left:50px;top:482.15999999999997px;width:1.5px;height:5px;background:#eee;"></div>
<div class="t" style="left:8.96px;top:508px;font-size:14.6px;color:#4d4d4d;">10</div>
<div class="abs" style="left:40.6px;top:509.22999999999996px;width:16.6px;height:13px;background:#fbfbfb;border:1px solid #d4d4d4;border-radius:3.500px"></div>
<div class="abs" style="left:44px;top:512.03px;width:11px;height:7.5px;background:#56607a;border-radius:3px;opacity:.8"></div>
<div class="abs" style="left:42px;top:514.53px;width:5px;height:1px;background:#99a;"></div>
<div class="t" style="left:10.04px;top:541px;font-size:14.6px;color:#4d4d4d;">11</div>
<div class="abs" style="left:40.6px;top:541.6px;width:16.6px;height:13px;background:#fbfbfb;border:1px solid #d4d4d4;border-radius:3.500px"></div>
<div class="abs" style="left:44px;top:545.4px;width:9px;height:1px;background:#d0d0d0;"></div>
<div class="abs" style="left:44px;top:548.4px;width:9px;height:1px;background:#dcdcdc;"></div>
<div class="abs" style="left:49px;top:542.9px;width:6px;height:1.2px;background:#b9b9b9;"></div>
<div class="t" style="left:8.96px;top:573px;font-size:14.6px;color:#4d4d4d;">12</div>
<div class="abs" style="left:40.6px;top:573.97px;width:16.6px;height:13px;background:#fbfbfb;border:1px solid #d4d4d4;border-radius:3.500px"></div>
<div class="abs" style="left:43px;top:576.77px;width:11px;height:7.5px;background:#3a3a3a;border-radius:1px;opacity:.85"></div>
<div class="abs" style="left:46px;top:576.77px;width:1px;height:7.5px;background:#ddd;"></div>
<div class="abs" style="left:50px;top:579.27px;width:1.5px;height:5px;background:#eee;"></div>
<div class="t" style="left:8.96px;top:606px;font-size:14.6px;color:#4d4d4d;">13</div>
<div class="abs" style="left:40.6px;top:606.3399999999999px;width:16.6px;height:13px;background:#fbfbfb;border:1px solid #d4d4d4;border-radius:3.500px"></div>
<div class="abs" style="left:44px;top:610.1399999999999px;width:9px;height:1px;background:#d0d0d0;"></div>
<div class="abs" style="left:44px;top:613.1399999999999px;width:9px;height:1px;background:#dcdcdc;"></div>
<div class="abs" style="left:49px;top:607.6399999999999px;width:6px;height:1.2px;background:#b9b9b9;"></div>
<div class="abs" style="left:52px;top:609.6399999999999px;width:3px;height:7px;background:#667;"></div>
<div class="t" style="left:8.96px;top:638px;font-size:14.6px;color:#4d4d4d;">14</div>
<div class="abs" style="left:40.6px;top:638.71px;width:16.6px;height:13px;background:#fbfbfb;border:1px solid #d4d4d4;border-radius:3.500px"></div>
<div class="abs" style="left:44px;top:642.51px;width:9px;height:1px;background:#d0d0d0;"></div>
<div class="abs" style="left:44px;top:645.51px;width:9px;height:1px;background:#dcdcdc;"></div>
<div class="abs" style="left:49px;top:640.01px;width:6px;height:1.2px;background:#b9b9b9;"></div>
<div class="abs" style="left:52px;top:644.01px;width:3px;height:2px;background:#456;"></div>
<div class="t" style="left:8.96px;top:670px;font-size:14.6px;color:#4d4d4d;">15</div>
<div class="abs" style="left:40.6px;top:671.0799999999999px;width:16.6px;height:13px;background:#fbfbfb;border:1px solid #d4d4d4;border-radius:3.500px"></div>
<div class="abs" style="left:6px;top:676.5px;width:76px;height:4px;background:#f0f0f0;"></div>
<div class="abs" style="left:448px;top:203px;width:477px;height:14px;background:#fdfdfd;"></div>
<div class="t" style="left:493.66px;top:205px;font-size:9.5px;color:#555;">4</div>
<div class="t" style="left:541.21px;top:205px;font-size:9.5px;color:#555;">3</div>
<div class="t" style="left:588.76px;top:205px;font-size:9.5px;color:#555;">2</div>
<div class="t" style="left:636.31px;top:205px;font-size:9.5px;color:#555;">1</div>
<div class="t" style="left:683.86px;top:205px;font-size:9.5px;color:#555;">0</div>
<div class="t" style="left:731.41px;top:205px;font-size:9.5px;color:#555;">1</div>
<div class="t" style="left:778.96px;top:205px;font-size:9.5px;color:#555;">2</div>
<div class="t" style="left:826.51px;top:205px;font-size:9.5px;color:#555;">3</div>
<div class="t" style="left:874.06px;top:205px;font-size:9.5px;color:#555;">4</div>
<div class="abs" style="left:96.5px;top:253px;width:15.7px;height:357px;background:#fdfdfd;"></div>
<div class="t" style="left:94.30px;top:283.85px;width:20px;height:10px;font-size:9.500px;color:#555;text-align:center;transform:rotate(-90deg)">3</div>
<div class="t" style="left:94.30px;top:331.40px;width:20px;height:10px;font-size:9.500px;color:#555;text-align:center;transform:rotate(-90deg)">2</div>
<div class="t" style="left:94.30px;top:378.95px;width:20px;height:10px;font-size:9.500px;color:#555;text-align:center;transform:rotate(-90deg)">1</div>
<div class="t" style="left:94.30px;top:426.50px;width:20px;height:10px;font-size:9.500px;color:#555;text-align:center;transform:rotate(-90deg)">0</div>
<div class="t" style="left:94.30px;top:474.05px;width:20px;height:10px;font-size:9.500px;color:#555;text-align:center;transform:rotate(-90deg)">1</div>
<div class="t" style="left:94.30px;top:521.60px;width:20px;height:10px;font-size:9.500px;color:#555;text-align:center;transform:rotate(-90deg)">2</div>
<div class="t" style="left:94.30px;top:569.15px;width:20px;height:10px;font-size:9.500px;color:#555;text-align:center;transform:rotate(-90deg)">3</div>
<div class="abs" style="left:1260px;top:201px;width:14px;height:476px;background:#f4f4f4;"></div>
<svg class="abs" style="left:1261.5px;top:206px;" width="8.7" height="5.7" viewBox="0 0 8.7 5.7" fill="none"><path d="M0 5.7L4.35 0L8.7 5.7z" fill="#7a7a7a"/></svg>
<div class="abs" style="left:1261.8px;top:266.8px;width:8px;height:18.6px;background:#7b7b7b;border-radius:4px"></div>
<svg class="abs" style="left:1261.5px;top:582px;" width="8.7" height="5.7" viewBox="0 0 8.7 5.7" fill="none"><path d="M0 0L4.35 5.7L8.7 0z" fill="#7a7a7a"/></svg>
<svg class="abs" style="left:1261.5px;top:595px;" width="8.7" height="6.3" viewBox="0 0 8.7 6.3" fill="none"><path d="M0 6.3L4.35 0L8.7 6.3z" fill="#7a7a7a"/></svg>
<svg class="abs" style="left:1261.5px;top:601.2px;" width="8.7" height="6.3" viewBox="0 0 8.7 6.3" fill="none"><path d="M0 6.3L4.35 0L8.7 6.3z" fill="#7a7a7a"/></svg>
<svg class="abs" style="left:1261.5px;top:612px;" width="8.7" height="6.3" viewBox="0 0 8.7 6.3" fill="none"><path d="M0 0L4.35 6.3L8.7 0z" fill="#7a7a7a"/></svg>
<svg class="abs" style="left:1261.5px;top:618px;" width="8.7" height="6.3" viewBox="0 0 8.7 6.3" fill="none"><path d="M0 0L4.35 6.3L8.7 0z" fill="#7a7a7a"/></svg>
<svg class="abs" style="left:1261.5px;top:650.3px;" width="8.7" height="5.7" viewBox="0 0 8.7 5.7" fill="none"><path d="M0 5.7L4.35 0L8.7 5.7z" fill="#7a7a7a"/></svg>
<svg class="abs" style="left:1261.5px;top:666.2px;" width="8.7" height="5.7" viewBox="0 0 8.7 5.7" fill="none"><path d="M0 0L4.35 5.7L8.7 0z" fill="#7a7a7a"/></svg>
<div class="t" style="left:106.20px;top:653px;font-size:13.8px;color:#6a6a6a;letter-spacing:0.312px;">Click to add notes</div>
<!-- SLIDE -->
<div class="abs" style="left:448.5px;top:253.5px;width:476px;height:356px;background:#fff;"></div>
<svg class="abs" style="left:0px;top:0px;" width="1280" height="720" viewBox="0 0 1280 720" fill="none"><path d="M673.400 253.500H759.500L754.700 278.400L724.600 272V257.300H673.400z" fill="#6785b3"/><path d="M770 253.500H855L846.500 296.300Q845.600 298.200 843.500 297.600L766 280Q764 279.300 764.600 277.500z" fill="#003a6c"/><path d="M863.500 253.500H924.500V275L860.500 290.300Q858.300 290.600 858.900 288.500z" fill="#d3066c"/></svg>
<div class="t" style="left:459.30px;top:273px;font-size:18.3px;color:#b81a58;letter-spacing:0.065px;font-weight:bold;">Dimensions of Quality of Life</div>
<div class="t" style="left:523.50px;top:316px;font-size:18px;color:#c4175a;">–</div>
<div class="t" style="left:538.60px;top:315px;font-size:18.4px;color:#1f3354;">Physical</div>
<div class="t" style="left:701.30px;top:316px;font-size:18px;color:#c4175a;">–</div>
<div class="t" style="left:715.60px;top:316px;font-size:18.4px;color:#1f3354;">Sexual</div>
<div class="t" style="left:523.50px;top:343px;font-size:18px;color:#c4175a;">–</div>
<div class="t" style="left:538.60px;top:342px;font-size:18.4px;color:#1f3354;">Emotional</div>
<div class="t" style="left:701.30px;top:343px;font-size:18px;color:#c4175a;">–</div>
<div class="t" style="left:715.60px;top:343px;font-size:18.4px;color:#1f3354;">Cognitive</div>
<div class="t" style="left:523.50px;top:369px;font-size:18px;color:#c4175a;">–</div>
<div class="t" style="left:538.60px;top:369px;font-size:18.4px;color:#1f3354;">Social</div>
<div class="t" style="left:701.30px;top:371px;font-size:18px;color:#c4175a;">–</div>
<div class="t" style="left:715.60px;top:370px;font-size:18.4px;color:#1f3354;">Spiritual</div>
<div class="t" style="left:750.50px;top:575px;font-size:14.5px;color:#1c2f5e;letter-spacing:0.529px;font-weight:bold;font-family:'Liberation Serif',serif;">Montefiore Einstein</div>
<div class="t" style="left:750.50px;top:591px;font-size:11.2px;color:#2d5278;letter-spacing:-0.175px;font-family:'Liberation Serif',serif;">Comprehensive Cancer Center</div>
<svg class="abs" style="left:656px;top:580px;" width="60" height="16" viewBox="0 0 60 16" fill="none"><path d="M3 6c10 3 22 4 27 4s17-1 27-4l-2 6c-9 2.500-17 3-25 3s-16-.5-25-3z" fill="#2c3f72"/><path d="M8 4c7 2 15 3 22 3s15-1 22-3" stroke="#8893b5" stroke-width="1.500"/></svg>
<div class="t" style="left:672.40px;top:595px;font-size:12.3px;color:#3a4660;letter-spacing:-0.588px;">2024</div>
<svg class="abs" style="left:719px;top:579px;" width="27" height="25" viewBox="0 0 27 25" fill="none"><circle cx="13" cy="12" r="12" fill="#1b82c5"/><path d="M3 9.500l10 3.500 10-3.500-10 8z" fill="#fff"/><path d="M5 20c5 2.500 11 2.500 16 0" stroke="#cfe6f5" stroke-width="1.300"/></svg>
<div class="abs" style="left:891px;top:576.5px;width:27.5px;height:22.5px;background:#1c7f9f;"></div>
<svg class="abs" style="left:891px;top:576.5px;" width="28" height="23" viewBox="0 0 28 23" fill="none"><path d="M0 0H27.500V3L19 7.500H0z" fill="#fff"/><path d="M2 11h23M3 14.500h21M4 18h19" stroke="#8fd0e0" stroke-width="1.300"/></svg>
<div class="t" style="left:897.50px;top:577px;font-size:6px;color:#d8232a;letter-spacing:1.333px;font-weight:bold;">NCI</div>
<div class="abs" style="left:497.3px;top:413.8px;width:365.3px;height:170.7px;background:#4068ae;"></div>
<div class="t" style="left:498.800px;top:415px;font-size:20.200px;color:#fff;-webkit-text-stroke:.45px #fff;transform-origin:0 50%;transform:scaleX(0.7368)">Causes of Distress</div>
<div class="abs" style="left:642.4px;top:424.3px;width:220px;height:1.2px;background:#fff;"></div>
<svg class="abs" style="left:0px;top:0px;" width="1280" height="720" viewBox="0 0 1280 720" fill="none"><circle cx="578.300" cy="512" r="53.300" fill="#f9e4d8"/><circle cx="573.200" cy="485.800" r="17.500" fill="#e8826b"/><circle cx="554.800" cy="521.800" r="17.500" fill="#e8826b"/><circle cx="595" cy="517.400" r="17.500" fill="#e8826b"/><path d="M559.500 488.500v-3.500q0-1.500 2-1.800l3.500-.5 3.500-3.700q.8-.7 2-.7h7.500q1.200 0 2 .8l3 3.600 3.500.7q1.500.4 1.500 1.800v3.300q0 1-1 1h-27.800q-1.200 0-1.200-1z" fill="#fff" stroke="#333" stroke-width="1"/><path d="M566.500 482.500l2.700-2.800h4v2.800zM574.700 479.700h3.800l2.500 2.800h-6.300z" fill="#ddd" stroke="#444" stroke-width=".6"/><circle cx="566.500" cy="489.500" r="2.700" fill="#fff" stroke="#333" stroke-width="1.100"/><circle cx="581.500" cy="489.500" r="2.700" fill="#fff" stroke="#333" stroke-width="1.100"/><path d="M546 524q-1-11 8.800-11.500 9.800.5 8.800 11.500z" fill="#222"/><circle cx="554.800" cy="517.500" r="4" fill="#e9a94a"/><path d="M549.500 527q0-5 5.300-5t5.300 5z" fill="#e9a94a"/><path d="M545.500 524.500l9 2.500 9-2.500v3l-9 2-9-2z" fill="#fff" stroke="#444" stroke-width=".6"/><rect x="544.500" y="530.500" width="20.500" height="3.600" rx="1.200" fill="#fff" stroke="#333" stroke-width=".9"/><rect x="583.500" y="510.500" width="24" height="14.500" rx="2" fill="#e6e6e8" stroke="#fff" stroke-width="1.300"/><path d="M585 520l8-6 5 4 4-3 4 3v5h-21z" fill="#d2d2d6"/><path d="M599.500 515.500h6.400M602.700 512.300v6.400" stroke="#222" stroke-width="2.300"/></svg>
<div class="abs" style="left:641px;top:435.6px;width:220.3px;height:144px;background:#fff;"></div>
<div class="t" style="left:647.00px;top:450px;font-size:8.8px;color:#6b6b6b;letter-spacing:-0.053px;font-weight:bold;font-style:italic;">Cause of Distress</div>
<div class="t" style="left:748.20px;top:445px;font-size:8.8px;color:#6b6b6b;letter-spacing:-0.040px;font-weight:bold;font-style:italic;">Percent of Individuals</div>
<div class="t" style="left:738.80px;top:456px;font-size:8.8px;color:#6b6b6b;letter-spacing:0.053px;font-weight:bold;font-style:italic;">Who Endorsed this Cause</div>
<div class="abs" style="left:646px;top:471.2px;width:215px;height:0.8px;background:#e6e6e6;"></div>
<div class="abs" style="left:726px;top:471.7px;width:135.3px;height:16.3px;background:#fbd9b9;"></div>
<div class="t" style="left:697.31px;top:475px;font-size:8.6px;color:#5a5a5a;font-weight:bold;font-style:italic;">Worry</div>
<div class="t" style="left:729.80px;top:475px;font-size:8.6px;color:#444;letter-spacing:-0.256px;-webkit-text-stroke:.25px #444;">70%</div>
<div class="t" style="left:686.62px;top:493px;font-size:8.6px;color:#5a5a5a;font-weight:bold;font-style:italic;">Sadness</div>
<div class="t" style="left:729.80px;top:493px;font-size:8.6px;color:#444;letter-spacing:-0.256px;-webkit-text-stroke:.25px #444;">53%</div>
<div class="abs" style="left:726px;top:507.44px;width:135.3px;height:16.3px;background:#fbd9b9;"></div>
<div class="t" style="left:667.98px;top:511px;font-size:8.6px;color:#5a5a5a;font-weight:bold;font-style:italic;">Nervousness</div>
<div class="t" style="left:729.80px;top:511px;font-size:8.6px;color:#444;letter-spacing:-0.256px;-webkit-text-stroke:.25px #444;">49%</div>
<div class="t" style="left:675.16px;top:529px;font-size:8.6px;color:#5a5a5a;font-weight:bold;font-style:italic;">Depression</div>
<div class="t" style="left:729.80px;top:529px;font-size:8.6px;color:#444;letter-spacing:-0.256px;-webkit-text-stroke:.25px #444;">42%</div>
<div class="abs" style="left:726px;top:543.18px;width:135.3px;height:16.3px;background:#fbd9b9;"></div>
<div class="t" style="left:661.47px;top:547px;font-size:8.6px;color:#5a5a5a;font-weight:bold;font-style:italic;">Transportation</div>
<div class="t" style="left:729.80px;top:547px;font-size:8.6px;color:#444;letter-spacing:-0.256px;-webkit-text-stroke:.25px #444;">30%</div>
<div class="t" style="left:681.37px;top:565px;font-size:8.6px;color:#5a5a5a;font-weight:bold;font-style:italic;">Insurance</div>
<div class="t" style="left:729.80px;top:565px;font-size:8.6px;color:#444;letter-spacing:-0.256px;-webkit-text-stroke:.25px #444;">21%</div>
<!-- STATUS BAR -->
<div class="abs" style="left:6px;top:676px;width:1268px;height:22px;background:#f4f4f4;"></div>
<div class="t" style="left:17.00px;top:683px;font-size:11px;color:#444;letter-spacing:-0.263px;">Slide 6 of 35</div>
<div class="t" style="left:106.20px;top:683px;font-size:11px;color:#444;letter-spacing:-0.341px;">English (United States)</div>
<svg class="abs" style="left:227.5px;top:680.5px;" width="14" height="14" viewBox="0 0 14 14" fill="none"><circle cx="6.300" cy="2" r="1.600" stroke="#333" stroke-width="1.100"/><path d="M.8 4.800l4 1.200h3l4-1.200M5 6v3.200l-2.500 4.300M7.800 6v3.200l1 1.500" stroke="#333" stroke-width="1.200"/><path d="M7.500 9.500l5 4.300M12.500 9.500l-5 4.300" stroke="#333" stroke-width="1.200"/></svg>
<div class="t" style="left:245.00px;top:683px;font-size:11px;color:#333;letter-spacing:-0.458px;font-weight:bold;">Accessibility: Investigate</div>
<svg class="abs" style="left:859px;top:680px;" width="16" height="14" viewBox="0 0 16 14" fill="none"><path d="M4.500 3.300L7.800.6l3.300 2.700" stroke="#444" stroke-width="1.100"/><path d="M0 6.300h15.500M0 9.500h15.500M0 12.700h15.500" stroke="#444" stroke-width="1.200"/></svg>
<div class="t" style="left:876.50px;top:683px;font-size:11px;color:#444;letter-spacing:-0.234px;">Notes</div>
<div class="abs" style="left:921.5px;top:678.5px;width:39.5px;height:19.5px;background:#e2e2e2;"></div>
<svg class="abs" style="left:935px;top:681px;" width="15" height="13" viewBox="0 0 15 13" fill="none"><rect x=".6" y=".6" width="13.600" height="11.400" stroke="#444" stroke-width="1.200"/><path d="M4.200 .6v11.400M4.200 8.300h10" stroke="#444" stroke-width="1.100"/><rect x="6.300" y="2.800" width="5.800" height="3.300" stroke="#444" stroke-width="1"/></svg>
<svg class="abs" style="left:974px;top:681px;" width="15" height="13" viewBox="0 0 15 13" fill="none"><rect x=".6" y=".6" width="5.200" height="4.300" stroke="#444" stroke-width="1.200"/><rect x="8.600" y=".6" width="5.200" height="4.300" stroke="#444" stroke-width="1.200"/><rect x=".6" y="7.600" width="5.200" height="4.300" stroke="#444" stroke-width="1.200"/><rect x="8.600" y="7.600" width="5.200" height="4.300" stroke="#444" stroke-width="1.200"/></svg>
<svg class="abs" style="left:1013.5px;top:681px;" width="14" height="13" viewBox="0 0 14 13" fill="none"><path d="M7 1.800C5.500.6 3 .5.600 1v10.600c2.400-.5 4.900-.4 6.400.8 1.500-1.200 4-1.300 6.400-.8V1C11 .5 8.500.6 7 1.800zM7 1.800v10.600" stroke="#444" stroke-width="1.200"/><path d="M2.500 3.500h2.800M2.500 5.800h2.800M2.500 8.100h2.800M8.700 3.500h2.800M8.700 5.800h2.800M8.700 8.100h2.800" stroke="#555" stroke-width=".8"/></svg>
<svg class="abs" style="left:1053.5px;top:681px;" width="13" height="14" viewBox="0 0 13 14" fill="none"><rect x=".6" y=".6" width="11.600" height="7" stroke="#444" stroke-width="1.200"/><path d="M6.400 7.600v4.800M3 12.700h6.800" stroke="#444" stroke-width="1.200"/></svg>
<div class="abs" style="left:1086.5px;top:687.2px;width:8px;height:1px;background:#888;"></div>
<div class="abs" style="left:1100px;top:687.2px;width:97.5px;height:1px;background:#777;"></div>
<div class="abs" style="left:1148.3px;top:684.5px;width:1px;height:6.5px;background:#888;"></div>
<div class="abs" style="left:1120px;top:682px;width:5.3px;height:11.4px;background:#666;"></div>
<div class="abs" style="left:1203px;top:687.2px;width:8.5px;height:1px;background:#777;"></div>
<div class="abs" style="left:1206.8px;top:683.3px;width:1px;height:8.7px;background:#777;"></div>
<div class="t" style="left:1223.30px;top:683px;font-size:11px;color:#444;letter-spacing:-1.158px;">50%</div>
<svg class="abs" style="left:1255px;top:680.5px;" width="15" height="15" viewBox="0 0 15 15" fill="none"><rect x="4" y="4" width="7" height="7" stroke="#444" stroke-width="1.200"/><path d="M5.200 2.500L7.500.5l2.300 2M5.200 12.500l2.300 2 2.300-2M2.500 5.200L.5 7.500l2 2.300M12.500 5.200l2 2.300-2 2.300" stroke="#444" stroke-width="1.100"/></svg>
<div class="abs" style="left:6px;top:24px;width:1268px;height:674px;border:1px solid #fbfbfb"></div>
</div></div>
<!-- WEBEX OVERLAYS -->
<div class="abs" style="left:21px;top:24px;width:148px;height:42px;background:#000;"></div>
<div class="t" style="left:37.50px;top:33px;font-size:16.6px;color:#f2f2f2;letter-spacing:-0.097px;">Via</div>
<div class="abs" style="left:69px;top:28.5px;width:1.1px;height:26px;background:#d8d8d8;"></div>
<div class="t" style="left:79.80px;top:29px;font-size:22.3px;color:#fff;letter-spacing:1.834px;-webkit-text-stroke:.6px #fff;">webex</div>
<div class="t" style="left:98.80px;top:52px;font-size:7px;color:#e8e8e8;letter-spacing:-0.693px;">by</div>
<div class="t" style="left:107.80px;top:52px;font-size:7.2px;color:#fff;letter-spacing:0.474px;font-weight:bold;">CISCO</div>
<div class="abs" style="left:1064px;top:12px;width:204px;height:113px;border-radius:5px;overflow:hidden;background:#5a4a40">
<svg class="abs" style="left:0px;top:0px;" width="204" height="113" viewBox="0 0 204 113" fill="none"><g filter="url(#vb)"><rect x="0" y="0" width="204" height="113" fill="#4a3b33"/><path d="M0 0H204V40L110 10 60 0z" fill="#9a8468"/><path d="M30 0h90v14L100 22 34 20z" fill="#a58c6c"/><path d="M0 0h11v14L0 16z" fill="#8a7a68"/><path d="M11 0h19v22L11 24z" fill="#33261f"/><path d="M0 16l11-2v10L0 27z" fill="#4a382e"/><path d="M25 2h8l2 18h-7z" fill="#b03a3a"/><path d="M27 2v18M30 2v18" stroke="#e8d8d8" stroke-width=".8"/><path d="M108 0h17v16l-17-3z" fill="#9a9a92"/><path d="M127 0h24v24l-24-8z" fill="#5d8a96"/><path d="M0 40L18 30 110 113H0z" fill="#90745f"/><path d="M88 12L204 52V100L150 75 100 40z" fill="#3b2a2e"/><path d="M118 22l12 4v14l-12-5zM134 28l12 5v15l-12-6zM150 36l14 5v16l-14-6zM168 44l14 6v17l-14-7zM186 52l16 7v18l-16-8z" fill="#4a2f3a"/><path d="M150 12L204 34V58L150 32z" fill="#8f836e"/><path d="M16 27L46 19.500 187 93 164.700 113H110.500z" fill="#d9dde0"/><path d="M46 19.500L187 93 183 97 44 22z" fill="#c3c8cc"/><path d="M75 56L104 48M110 85l44-14" stroke="#c5cacd" stroke-width=".8"/><path d="M16 27L110.500 113H96L14 32z" fill="#2a2422"/><path d="M0 22q8-6 12 4l6 14-8 10H0z" fill="#c9452e"/><circle cx="6" cy="19" r="5" fill="#d8b8a8"/><path d="M10 40l16 2 8 18-14 6-10-12z" fill="#2e3a50"/><path d="M68 8q6-6 12 0l6 14-22 2z" fill="#2a2622"/><path d="M60 22q6-4 10 2l2 10-14-2z" fill="#7f9cc0"/><path d="M72 28q8-8 16 0l4 14-20-4z" fill="#b9a6a0"/><circle cx="80" cy="24" r="4.500" fill="#3a2a26"/><path d="M96 30q8-8 16 2l4 22-22-8z" fill="#2a2a30"/><circle cx="103" cy="26" r="5" fill="#caa890"/><path d="M112 30q5-6 10 0l2 12-12-3z" fill="#c8b0a0"/><path d="M130 48q10-4 14 6l4 22-16-6z" fill="#b08a6a"/><path d="M158 70q8-10 22-6l12 8 2 16-16 6-22-10z" fill="#1f7fb0"/><circle cx="178" cy="58" r="6" fill="#3a2822"/><path d="M162 80l14 2 4 6-14-2z" fill="#d8b8a0"/><path d="M190 76q10 0 12 14v18h-12z" fill="#2a2426"/><circle cx="197" cy="96" r="4" fill="#a02a30"/><path d="M73 41l10 5-3 3-10-5z" fill="#2a2a2e"/><path d="M114 58l9 4-3 5-9-4z" fill="#3a3a40"/><path d="M107 72l20-3 4 7-20 4z" fill="#70767c"/><path d="M102 54l6 2-2 3-6-2zM50 24l5 2-2 2-5-2zM92 50l5 2-2 2-5-2z" fill="#222"/><path d="M62 40l14 3-5 5-13-3zM84 53l14 3-5 5-13-3zM140 80l16 4-5 7-15-5zM130 68l12 3-3 5-12-3z" fill="#f4f6f8"/><path d="M38 29l6-1 2 7-7 1z" fill="#b8c8d8"/><path d="M4 50l4 22M16 52l4 22M30 70l6 20M42 64l16 30" stroke="#2a2220" stroke-width="1.200"/></g><defs><filter id="vb" x="-5%" y="-5%" width="110%" height="110%"><feGaussianBlur stdDeviation=".9"/></filter></defs></svg>
<div class="abs" style="left:0px;top:89px;width:106px;height:24px;background:rgba(30,26,24,.8);"></div>
<div class="t" style="left:10.00px;top:92px;font-size:15px;color:#fff;letter-spacing:0.414px;">CB 11 Office</div>
</div>
<div class="abs" style="left:1213px;top:7px;width:58.5px;height:41px;background:#1b1b1b;border-radius:20.500px;border:1px solid #2c2c2c"></div>
<div class="abs" style="left:1220px;top:15.8px;width:42px;height:24.2px;background:#b9b9b9;border-radius:12.100px"></div>
<svg class="abs" style="left:1227px;top:21.3px;" width="10.5" height="13.3" viewBox="0 0 10.5 13.3" fill="none"><circle cx="5.500" cy="3.300" r="3" fill="#1a1a1a"/><path d="M0 13q0-6 5.500-6t5.500 6z" fill="#1a1a1a"/></svg>
<div class="t" style="left:1242.00px;top:22px;font-size:12px;color:#111;letter-spacing:0.518px;">+6</div>
<svg class="abs" style="left:1223px;top:454.8px;" width="11.2" height="19" viewBox="0 0 10 17" fill="none"><path d="M0 0v13.800l3.100-3 2.500 5.700 2.100-.9-2.500-5.600h4.100z" fill="#000" stroke="#fafafa" stroke-width=".5"/></svg>
</body>
</html>
